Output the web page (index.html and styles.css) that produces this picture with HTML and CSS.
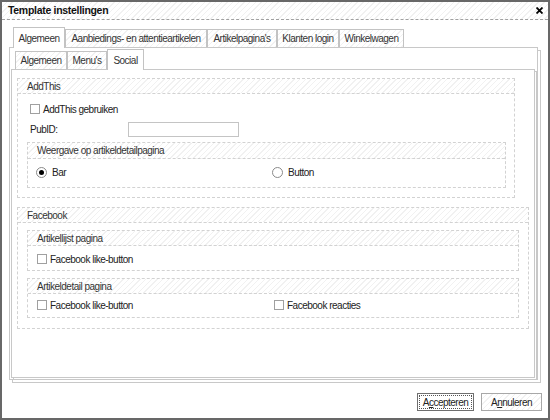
FILE: index.html
```html
<!DOCTYPE html>
<html>
<head>
<meta charset="utf-8">
<link rel="stylesheet" href="styles.css">
</head>
<body>
<div class="window">
  <div class="titlebar hatch">
    <span class="title">Template instellingen</span>
    <svg class="close" width="7" height="7" viewBox="0 0 7 7"><path d="M0.5 0.5 L6.5 6.5 M6.5 0.5 L0.5 6.5" stroke="#000" stroke-width="1.8" fill="none"/></svg>
  </div>
  <div class="content">
    <div class="tabs tabs-main">
      <div class="tab active w52">Algemeen</div>
      <div class="tab hatch w142">Aanbiedings- en attentieartikelen</div>
      <div class="tab hatch w70">Artikelpagina's</div>
      <div class="tab hatch w62">Klanten login</div>
      <div class="tab hatch w65">Winkelwagen</div>
    </div>
    <div class="panel panel-outer">
      <div class="tabs tabs-sub">
        <div class="tab hatch w52">Algemeen</div>
        <div class="tab hatch w40">Menu's</div>
        <div class="tab active w37">Social</div>
      </div>
      <div class="panel panel-inner">
        <div class="group g-addthis">
          <div class="group-head hatch">AddThis</div>
          <div class="group-body b-addthis">
            <div class="row indent"><span class="check"></span><span>AddThis gebruiken</span></div>
            <div class="row row-input indent"><span class="label">PubID:</span><span class="input"></span></div>
            <div class="group g-weergave">
              <div class="group-head hatch head-16">Weergave op artikeldetailpagina</div>
              <div class="group-body b-weergave">
                <div class="row">
                  <div class="opt"><span class="radio on"></span><span>Bar</span></div>
                  <div class="opt"><span class="radio"></span><span>Button</span></div>
                </div>
              </div>
            </div>
          </div>
        </div>
        <div class="group g-facebook">
          <div class="group-head hatch">Facebook</div>
          <div class="group-body b-facebook">
            <div class="group g-sub">
              <div class="group-head hatch">Artikellijst pagina</div>
              <div class="group-body b-lijst">
                <div class="row">
                  <div class="opt opt-check"><span class="check"></span><span>Facebook like-button</span></div>
                </div>
              </div>
            </div>
            <div class="group g-sub g-detail">
              <div class="group-head hatch">Artikeldetail pagina</div>
              <div class="group-body b-detail">
                <div class="row">
                  <div class="opt opt-check"><span class="check"></span><span>Facebook like-button</span></div>
                  <div class="opt opt-check"><span class="check"></span><span>Facebook reacties</span></div>
                </div>
              </div>
            </div>
          </div>
        </div>
      </div>
    </div>
    <div class="footer">
      <div class="btn btn-primary w57">A<u>c</u>cepteren</div>
      <div class="btn hatch w61">A<u>n</u>nuleren</div>
    </div>
  </div>
</div>
</body>
</html>
```
FILE: styles.css
```css
* { box-sizing: border-box; margin: 0; padding: 0; }
html, body { width: 550px; height: 420px; overflow: hidden; background: #fff; }
body {
  font-family: "Liberation Sans", Arial, sans-serif;
  font-size: 10px;
  letter-spacing: -0.5px;
  color: #222;
}
.window {
  width: 550px;
  height: 420px;
  border: 2px solid #686868;
  display: flex;
  flex-direction: column;
}
.hatch {
  background: repeating-linear-gradient(135deg, #ffffff 0 3px, #f1f1f1 3px 4px);
}
.titlebar {
  height: 18px;
  border-bottom: 1px dashed #a0a0a0;
  display: flex;
  align-items: center;
  justify-content: space-between;
  padding: 0 5px 1px 6px;
}
.title { font-weight: bold; font-size: 10.5px; letter-spacing: -0.3px; color: #111; }
.close { display: block; }
.content { padding-left: 7px; }

.tabs { display: flex; align-items: flex-end; height: 20px; }
.tabs-main { margin: 7px 0 0 4px; }
.tabs-sub { margin: 1px 0 0 5px; }
.tab {
  height: 18px;
  border: 1px solid #c3c3c3;
  border-bottom: 0;
  display: flex;
  align-items: center;
  justify-content: center;
  color: #333;
  white-space: nowrap;
}
.tab.active {
  height: 21px;
  margin-bottom: -1px;
  background: #fff;
  position: relative;
  z-index: 1;
  padding-top: 1px;
}
.w37 { width: 37px; } .w40 { width: 40px; } .w52 { width: 52px; }
.w57 { width: 57px; } .w61 { width: 61px; } .w62 { width: 62px; }
.w65 { width: 65px; } .w70 { width: 70px; } .w142 { width: 142px; }

.panel { border: 1px solid #c8c8c8; background: #fff; }
.panel-outer {
  width: 529px;
  height: 333px;
  box-shadow: 3px 3px 0 -1px #fff, 3px 3px 0 0 #c8c8c8;
}
.panel-inner {
  margin-left: 1px;
  width: 524px;
  height: 309px;
  box-shadow: 2px 2px 0 -1px #fff, 2px 2px 0 0 #c8c8c8;
}

.group { border: 1px dashed #d2d2d2; }
.group-head {
  height: 15px;
  border-bottom: 1px dashed #d2d2d2;
  display: flex;
  align-items: center;
  padding-left: 9px;
  color: #333;
}
.head-16 { height: 16px; }
.g-addthis { margin: 8px 0 0 5px; width: 498px; }
.b-addthis { padding: 7px 0 9px 9px; }
.row { display: flex; align-items: center; height: 16px; gap: 3px; }
.indent { margin-left: 3px; }
.row-input { margin-top: 5px; height: 15px; gap: 0; }
.label { width: 98px; }
.input { width: 111px; height: 15px; border: 1px solid #c4c4c4; background: #fff; }
.g-weergave { margin-top: 5px; width: 479px; }
.b-weergave { padding: 5px 0 7px 8px; }
.opt { width: 234px; display: flex; align-items: center; gap: 5px; }
.opt-check { gap: 3px; }

.g-facebook { margin: 9px 0 0 5px; width: 512px; }
.b-facebook { padding: 7px 0 10px 9px; }
.g-sub { width: 492px; }
.g-detail { margin-top: 7px; }
.b-lijst { padding: 5px 0 3px 9px; }
.b-detail { padding: 3px 0 4px 9px; }

.check {
  width: 10px;
  height: 10px;
  border: 1px solid #a0a0a0;
  background: #fff;
  flex: none;
}
.radio {
  width: 11px;
  height: 11px;
  border: 1px solid #8a8a8a;
  border-radius: 50%;
  background: #fff;
  flex: none;
  display: flex;
  align-items: center;
  justify-content: center;
}
.radio.on::after {
  content: "";
  width: 5px;
  height: 5px;
  border-radius: 50%;
  background: #000;
}

.footer {
  display: flex;
  justify-content: flex-end;
  gap: 7px;
  margin-top: 13px;
  padding-right: 6px;
}
.btn {
  height: 18px;
  border: 1px solid #a8a8a8;
  display: flex;
  align-items: center;
  justify-content: center;
  color: #222;
}
.btn-primary {
  border-color: #6f6f6f;
  background: #fff;
  outline: 1px dotted #555;
  outline-offset: -3px;
}
u { text-decoration: underline; }
```
